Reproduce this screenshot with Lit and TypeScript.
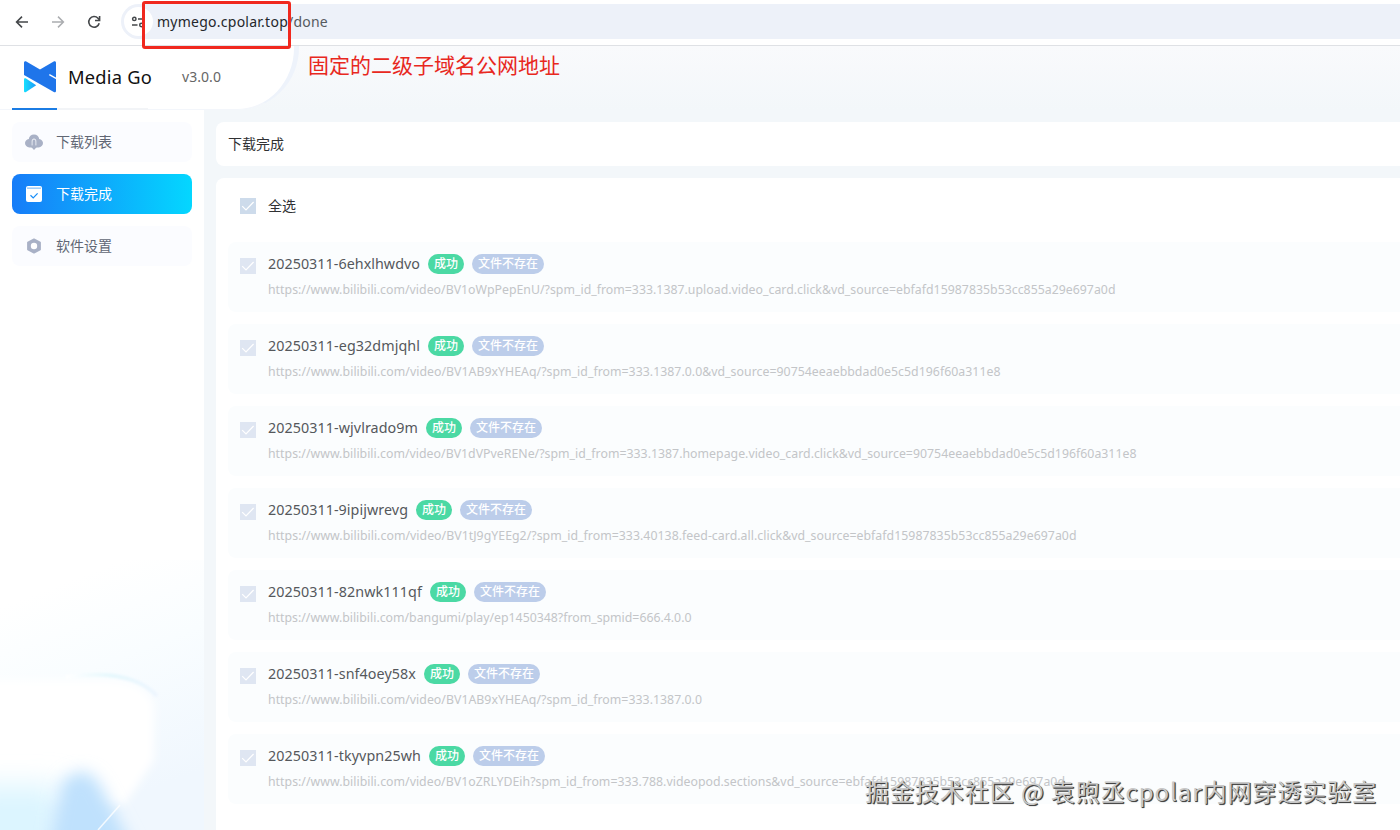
import { LitElement, html, css } from "lit";
import { customElement, property } from "lit/decorators.js";

/** Single line of text whose tracking is adjusted to fill a given width. */
@customElement("fit-text")
class FitText extends LitElement {
  @property() text = "";
  @property({ type: Number }) w = 0;

  static styles = css`
    :host { display: inline-block; white-space: nowrap; flex: none; }
    span { display: inline-block; white-space: pre; }
  `;

  render() {
    return html`<span>${this.text}</span>`;
  }

  updated() {
    const span = this.renderRoot.querySelector("span") as HTMLElement;
    this.style.width = `${this.w}px`;
    const fit = () => {
      span.style.letterSpacing = "0px";
      const natural = span.getBoundingClientRect().width;
      span.style.letterSpacing = `${(this.w - natural) / Array.from(this.text).length}px`;
    };
    fit();
    document.fonts.ready.then(fit);
  }
}

interface Item {
  name: string;
  nameWidth: number;
  url: string;
  urlWidth: number;
}

const items: Item[] = [
  { name: "20250311-6ehxlhwdvo", nameWidth: 152, url: "https://www.bilibili.com/video/BV1oWpPepEnU/?spm_id_from=333.1387.upload.video_card.click&vd_source=ebfafd15987835b53cc855a29e697a0d", urlWidth: 847.5 },
  { name: "20250311-eg32dmjqhl", nameWidth: 152, url: "https://www.bilibili.com/video/BV1AB9xYHEAq/?spm_id_from=333.1387.0.0&vd_source=90754eeaebbdad0e5c5d196f60a311e8", urlWidth: 732.5 },
  { name: "20250311-wjvlrado9m", nameWidth: 150, url: "https://www.bilibili.com/video/BV1dVPveRENe/?spm_id_from=333.1387.homepage.video_card.click&vd_source=90754eeaebbdad0e5c5d196f60a311e8", urlWidth: 868.5 },
  { name: "20250311-9ipijwrevg", nameWidth: 140, url: "https://www.bilibili.com/video/BV1tJ9gYEEg2/?spm_id_from=333.40138.feed-card.all.click&vd_source=ebfafd15987835b53cc855a29e697a0d", urlWidth: 808.5 },
  { name: "20250311-82nwk111qf", nameWidth: 154, url: "https://www.bilibili.com/bangumi/play/ep1450348?from_spmid=666.4.0.0", urlWidth: 423.5 },
  { name: "20250311-snf4oey58x", nameWidth: 148, url: "https://www.bilibili.com/video/BV1AB9xYHEAq/?spm_id_from=333.1387.0.0", urlWidth: 434 },
  { name: "20250311-tkyvpn25wh", nameWidth: 153, url: "https://www.bilibili.com/video/BV1oZRLYDEih?spm_id_from=333.788.videopod.sections&vd_source=ebfafd15987835b53cc855a29e697a0d", urlWidth: 797 },
];

const check = html`<svg class="check" width="16" height="16" viewBox="0 0 16 16">
  <path d="M2.2 8.2 6 12 13.6 4" fill="none" stroke="#fff" stroke-width="1.2" />
</svg>`;

const cloudIcon = html`<svg width="20" height="18" viewBox="0 0 20 18">
  <path d="M10 1.5c-2.900 0-4.900 1.900-5.200 4.400C2.500 6.200 1 7.900 1 10.100c0 2.500 1.900 4.300 4.400 4.300h9.200c2.500 0 4.400-1.800 4.400-4.300 0-2.200-1.500-3.900-3.800-4.200C14.900 3.400 12.900 1.500 10 1.500z" fill="#a9b1c6" />
  <path d="M8.200 12.800V7.800a1.800 1.800 0 0 1 3.600 0v5" fill="none" stroke="#f5f7fc" stroke-width="1" />
  <path d="M5.800 12.600h2.900V8.200h2.600v4.400h2.900L10 16.900z" fill="#a9b1c6" />
</svg>`;

const doneIcon = html`<svg width="16" height="16" viewBox="0 0 16 16">
  <path d="M2 0h12a2 2 0 0 1 2 2v2H0V2a2 2 0 0 1 2-2z" fill="#fff" />
  <path d="M1 1.500h14v1.300H1z" fill="#8cc3f8" />
  <path d="M0 3.200h16V14a2 2 0 0 1-2 2H2a2 2 0 0 1-2-2z" fill="#fff" />
  <path d="M4.500 9.300 7.200 11.900 11.600 7.400" fill="none" stroke="#178df8" stroke-width="1.200" />
</svg>`;

const hexIcon = html`<svg width="16" height="16" viewBox="0 0 16 16">
  <path d="M8 1.200 14.100 4.500v7L8 14.800 1.900 11.500v-7z" fill="#a9b1c6" stroke="#a9b1c6" stroke-width="1.600" stroke-linejoin="round" />
  <circle cx="8" cy="8" r="3.200" fill="#fff" />
</svg>`;

@customElement("app-root")
class AppRoot extends LitElement {
  static styles = css`
    :host {
      display: block; position: relative; width: 1400px; height: 830px; overflow: hidden;
      background: #f3f7fa; color: #303133;
      font-family: "Noto Sans", "Noto Sans CJK SC", sans-serif;
    }
    * { box-sizing: border-box; }
    svg { display: block; flex: none; }
    .page { display: flex; flex-direction: column; height: 100%; }

    .toolbar { height: 46px; flex: none; display: flex; align-items: flex-start; background: #fff; border-bottom: 1px solid #dfe1e5; padding: 4px 0 0 12px; }
    .nav { display: flex; gap: 16px; height: 36px; align-items: center; }
    .address { flex: 1; margin-left: 17px; height: 35px; display: flex; align-items: center; background: #edf1f9; border-radius: 18px 0 0 18px; padding-left: 3px; }
    .site { width: 29px; height: 29px; border-radius: 50%; background: #fff; display: flex; align-items: center; justify-content: center; padding-right: 2px; }
    .host { margin-left: 4px; font-size: 14px; line-height: 20px; color: #24272b; }
    .path { font-size: 14px; line-height: 20px; color: #565a60; }

    .header { height: 64px; flex: none; display: flex; background: linear-gradient(#f9fafc, #f3f7fa); }
    .brand { width: 299px; height: 64px; background: #fff; border-right: 5px solid #eef3fb; border-bottom: 1px solid #f3f6fb; border-radius: 0 0 62px 0; display: flex; align-items: center; padding: 0 0 1px 23px; }
    .title { margin-left: 11px; font-size: 18.3px; line-height: 26px; color: #111; }
    .version { margin-left: 30px; font-size: 14px; line-height: 20px; color: #666; }
    .progress { position: absolute; left: 12px; top: 108px; width: 136px; height: 2px; background: linear-gradient(90deg, #1b7ce4 45px, #f2f4f7 45px); }

    .body { flex: 1; min-height: 0; display: flex; }
    .side { width: 204px; flex: none; position: relative; background: #fff; padding: 12px; display: flex; flex-direction: column; gap: 12px; overflow: hidden; }
    .art { position: absolute; left: 0; bottom: 0; }
    .item { height: 40px; flex: none; border-radius: 8px; background: #fbfcff; display: flex; align-items: center; padding-left: 12px; font-size: 14px; color: #616774; position: relative; }
    .item.active { background: linear-gradient(90deg, #177cf8, #04d7ff); color: #fff; }
    .ico { width: 20px; display: flex; justify-content: center; margin-right: 12px; }
    .item-label { line-height: 20px; }

    .main { flex: 1; min-width: 0; padding: 12px 0 0 12px; display: flex; flex-direction: column; gap: 12px; }
    .crumb { height: 44px; flex: none; background: #fff; border-radius: 8px 0 0 8px; padding: 0 0 2px 12px; display: flex; align-items: center; font-size: 14px; }
    .panel { flex: 1; min-height: 0; background: #fff; border-radius: 8px 0 0 0; padding: 12px 0 0 12px; overflow: hidden; }
    .all { height: 32px; display: flex; align-items: center; padding-left: 12px; gap: 12px; font-size: 14px; margin-bottom: 20px; }
    .all span { padding-bottom: 2px; }
    .check { background: #cddbeb; }
    .row { height: 70px; margin-bottom: 12px; padding: 10px 0 0 12px; background: #fbfdfe; border-radius: 8px 0 0 8px; display: flex; gap: 12px; }
    .row .check { margin-top: 6px; background: #dfe6f2; }
    .line { display: flex; align-items: center; height: 24px; }
    .name { font-size: 14.3px; line-height: 24px; color: #55585c; }
    .tag { height: 20px; border-radius: 10px; color: #fff; font-size: 12px; line-height: 19px; margin-left: 8px; padding: 0 6px; font-weight: 500; }
    .ok { background: #4bd9a4; }
    .gone { background: #bccdea; }
    .url { font-size: 12.3px; line-height: 18px; margin-top: 5px; color: #c3c5c8; }

    .frame { position: absolute; left: 142px; top: 1px; width: 149px; height: 48px; border: 3px solid #f0281e; border-radius: 3px; }
    .note { position: absolute; left: 308px; top: 50px; font-size: 21px; line-height: 30px; color: #e8281e; }
    .mark { position: absolute; left: 865px; top: 774px; font-family: "Noto Sans CJK SC", sans-serif; font-size: 24px; line-height: 34px; color: #c9c9c9; text-shadow: 1px 1px 0 #444, 1px 1px 1px #333; }
  `;

  private row(item: Item) {
    return html`<div class="row">
      ${check}
      <div>
        <div class="line">
          <fit-text class="name" .text=${item.name} .w=${item.nameWidth}></fit-text>
          <span class="tag ok">成功</span>
          <span class="tag gone">文件不存在</span>
        </div>
        <fit-text class="url" .text=${item.url} .w=${item.urlWidth}></fit-text>
      </div>
    </div>`;
  }

  private entry(icon: unknown, label: string, active = false) {
    return html`<div class="item ${active ? "active" : ""}">
      <span class="ico">${icon}</span><span class="item-label">${label}</span>
    </div>`;
  }

  render() {
    return html`
      <div class="page">
        <div class="toolbar">
          <div class="nav">
            <svg width="20" height="20" viewBox="0 0 20 20" fill="none" stroke="#44474a" stroke-width="1.6"><path d="M16 10H4.800M10 4.600 4.600 10l5.400 5.400" /></svg>
            <svg width="20" height="20" viewBox="0 0 20 20" fill="none" stroke="#abadb0" stroke-width="1.500"><path d="M4 10h11.200M10 4.600 15.400 10 10 15.400" /></svg>
            <svg width="20" height="20" viewBox="0 0 20 20" fill="none" stroke="#44474a" stroke-width="1.600"><path d="M15.200 11.200A5.300 5.300 0 1 1 14 6.300L15.500 8" /><path d="M15.600 4v4.500H11" /></svg>
          </div>
          <div class="address">
            <span class="site">
              <svg width="16" height="16" viewBox="0 0 16 16" fill="none" stroke="#44474a" stroke-width="1.500"><circle cx="4.300" cy="4.900" r="1.700" /><path d="M8 4.900h6M2 11h5.500" /><circle cx="11.400" cy="11" r="1.700" /></svg>
            </span>
            <fit-text class="host" text="mymego.cpolar.top" w="131"></fit-text>
            <fit-text class="path" text="/done" w="40"></fit-text>
          </div>
        </div>
        <div class="header">
          <div class="brand">
            <svg width="34" height="34" viewBox="0 0 34 34">
              <defs><linearGradient id="c" x1="0" x2="1"><stop offset="0" stop-color="#16e0ff" /><stop offset="1" stop-color="#1c9af8" /></linearGradient></defs>
              <path d="M1 2.800C1 1.500 2.200 1 3.300 1.600L17 9.600 30.700 1.600C31.800 1 33 1.500 33 2.800V31c0 1.200-1.200 1.700-2.200 1.100L1 15z" fill="#1f75ea" />
              <path d="M26.300 14.600 33.500 18.600" stroke="#fff" stroke-width="1.300" />
              <path d="M1 19.500c0-1.200 1-1.600 2-1L13.200 25.200 3 31.900c-1 .6-2 0-2-1z" fill="url(#c)" />
            </svg>
            <fit-text class="title" text="Media Go" w="84"></fit-text>
            <fit-text class="version" text="v3.0.0" w="39"></fit-text>
          </div>
        </div>
        <div class="body">
          <div class="side">
            <svg class="art" width="204" height="270" viewBox="0 0 204 270">
              <defs>
                <linearGradient id="bg" gradientUnits="userSpaceOnUse" x1="70" y1="20" x2="150" y2="230"><stop offset="0" stop-color="#fff" /><stop offset=".4" stop-color="#f9fdff" /><stop offset="1" stop-color="#f0f7fe" /></linearGradient>
                <filter id="b1" x="-50%" y="-50%" width="200%" height="200%"><feGaussianBlur stdDeviation="14" /></filter>
                <filter id="b2" x="-50%" y="-50%" width="200%" height="200%"><feGaussianBlur stdDeviation="8" /></filter>
                <filter id="b3" x="-50%" y="-50%" width="200%" height="200%"><feGaussianBlur stdDeviation="4" /></filter>
                <filter id="b4" x="-20%" y="-50%" width="140%" height="200%"><feGaussianBlur stdDeviation="1" /></filter>
                <linearGradient id="arc" x1="0" x2="1"><stop offset="0" stop-color="#fff" /><stop offset=".5" stop-color="#e6f8fd" /><stop offset="1" stop-color="#eef6fe" /></linearGradient>
              </defs>
              <rect width="204" height="270" fill="url(#bg)" />
              <path d="M-30 120H110Q148 122 154 145V200L124 245H-30z" fill="#fff" filter="url(#b3)" />
              <path d="M66 117Q132 108 157 136" fill="none" stroke="url(#arc)" stroke-width="4" filter="url(#b4)" />
              <path d="M-30 225H60V310H-30z" fill="#dcf5ff" filter="url(#b1)" />
              <path d="M62 222Q85 200 100 225L134 290H48z" fill="#bfe1fd" filter="url(#b2)" />
              <path d="M98 270 120 245" stroke="#fff" stroke-width="1.500" opacity=".8" />
            </svg>
            ${this.entry(cloudIcon, "下载列表")}
            ${this.entry(doneIcon, "下载完成", true)}
            ${this.entry(hexIcon, "软件设置")}
          </div>
          <div class="main">
            <div class="crumb">下载完成</div>
            <div class="panel">
              <div class="all">${check}<span>全选</span></div>
              ${items.map((item) => this.row(item))}
            </div>
          </div>
        </div>
      </div>
      <div class="progress"></div>
      <div class="frame"></div>
      <div class="note">固定的二级子域名公网地址</div>
      <fit-text class="mark" text="掘金技术社区 @ 袁煦丞cpolar内网穿透实验室" w="512"></fit-text>
    `;
  }
}
